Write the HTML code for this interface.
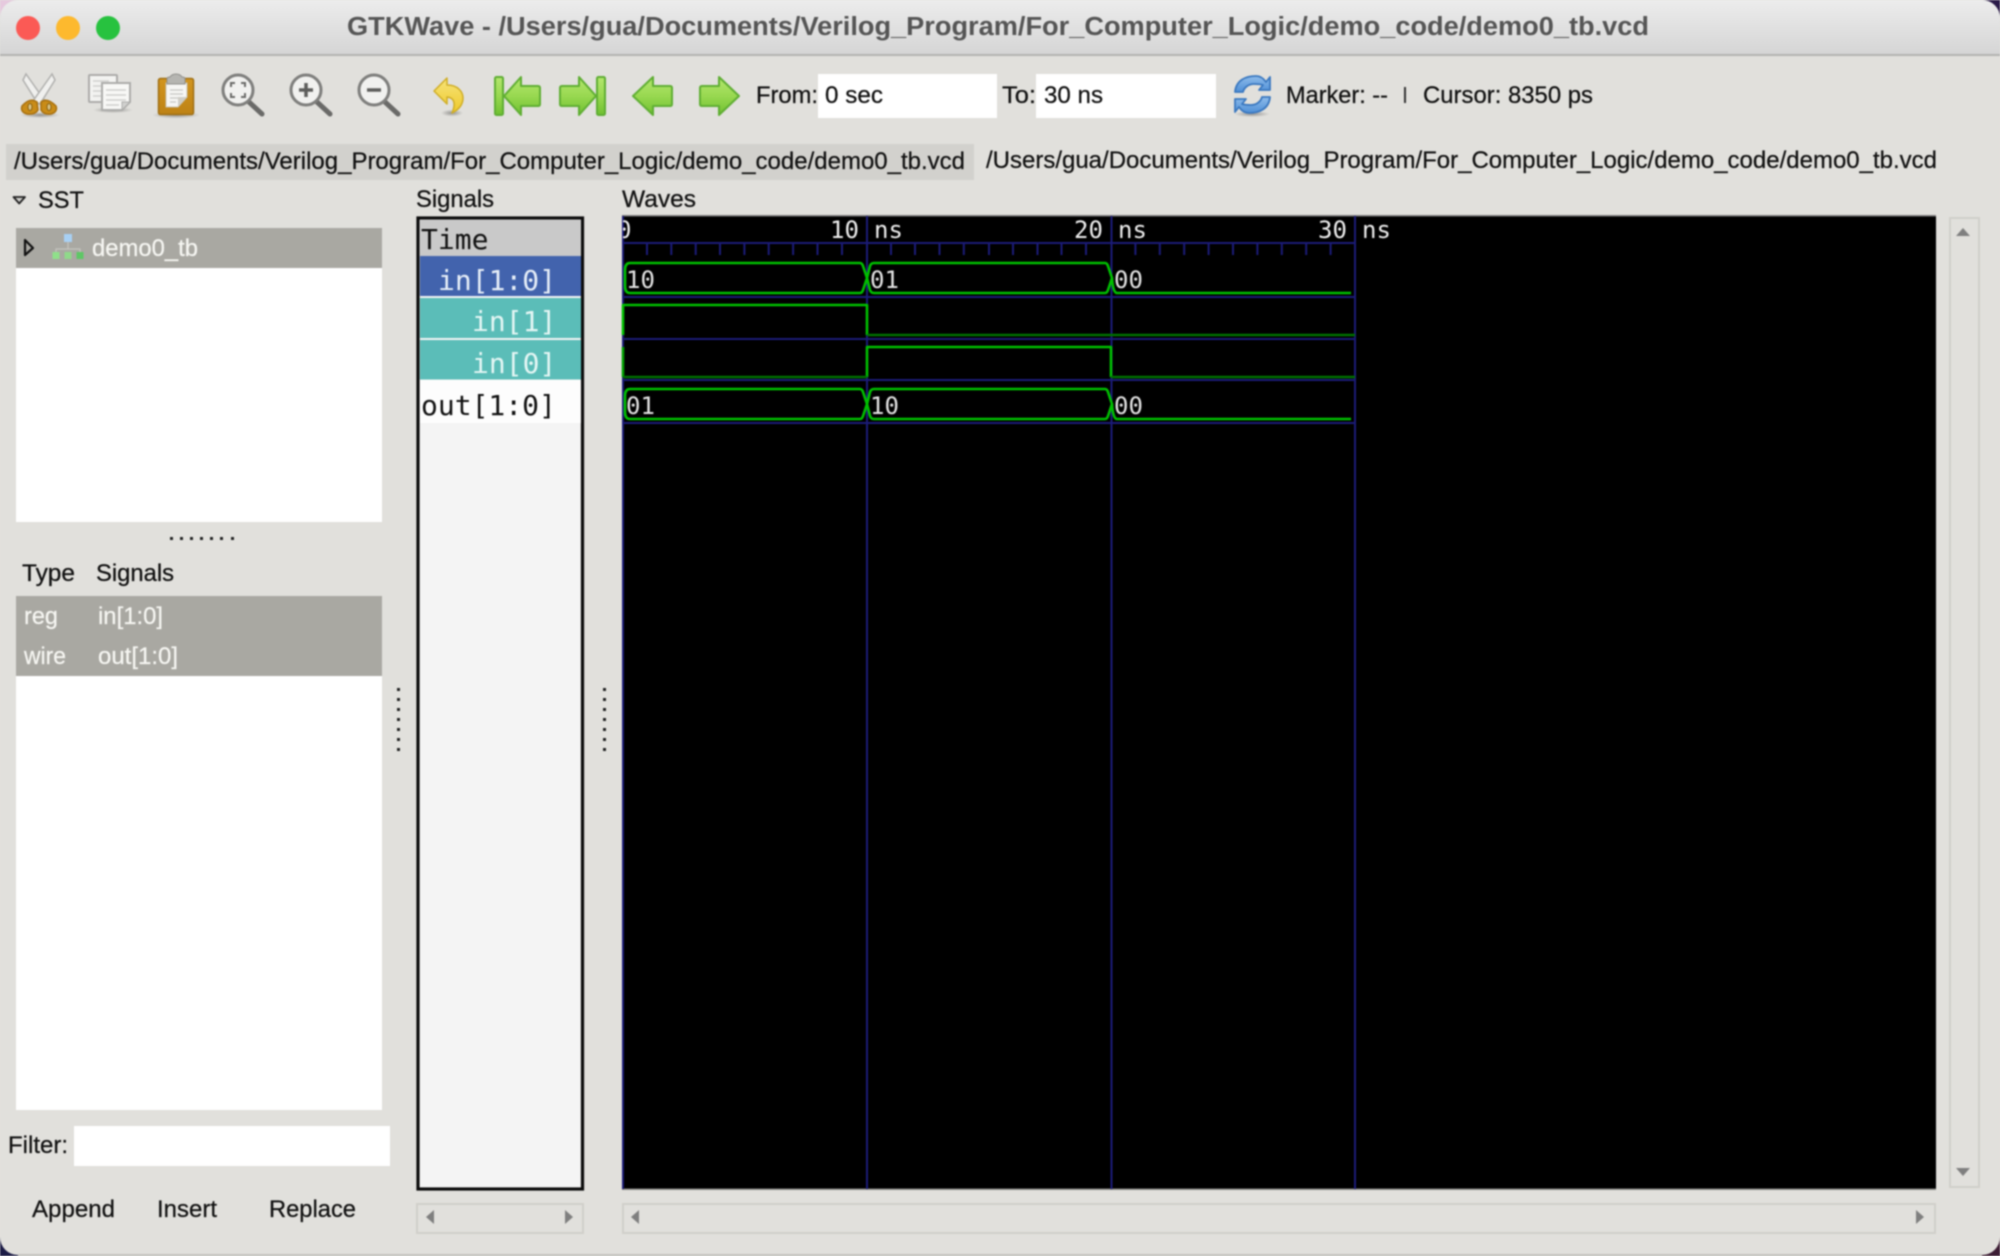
<!DOCTYPE html>
<html>
<head>
<meta charset="utf-8">
<title>GTKWave</title>
<style>
html,body{margin:0;padding:0;width:2000px;height:1256px;overflow:hidden;background:#e1e0dc}
svg{display:block;filter:blur(.7px)}
.s{font-family:"Liberation Sans",sans-serif;font-size:24.5px;fill:#111;stroke:#111;stroke-width:.25px}
.w{fill:#f6f6f2;stroke:#f6f6f2}
.m{font-family:"DejaVu Sans Mono",monospace;font-size:28px;fill:#111}
.v{font-family:"DejaVu Sans Mono",monospace;font-size:24px;fill:#e4e4e4}
.r{font-family:"DejaVu Sans Mono",monospace;font-size:24px;fill:#eee}
</style>
</head>
<body>
<svg xmlns="http://www.w3.org/2000/svg" width="2000" height="1256" viewBox="0 0 2000 1256">
<defs>
<linearGradient id="tb" x1="0" y1="0" x2="0" y2="1"><stop offset="0" stop-color="#ececec"/><stop offset="1" stop-color="#d5d5d5"/></linearGradient>
<linearGradient id="gr" x1="0" y1="0" x2="0" y2="1"><stop offset="0" stop-color="#b4e66e"/><stop offset=".5" stop-color="#98d850"/><stop offset="1" stop-color="#6fc030"/></linearGradient>
<linearGradient id="ye" x1="0" y1="0" x2="0" y2="1"><stop offset="0" stop-color="#f6e37a"/><stop offset="1" stop-color="#eec92a"/></linearGradient>
<linearGradient id="cb" x1="0" y1="0" x2="0" y2="1"><stop offset="0" stop-color="#d2951f"/><stop offset="1" stop-color="#bd8215"/></linearGradient>
<linearGradient id="bl" x1="0" y1="0" x2="0" y2="1"><stop offset="0" stop-color="#8fbcea"/><stop offset="1" stop-color="#4f8fd6"/></linearGradient>
<radialGradient id="sh"><stop offset="0" stop-color="#000" stop-opacity=".35"/><stop offset="1" stop-color="#000" stop-opacity="0"/></radialGradient>
<clipPath id="wc"><rect x="623" y="216" width="1313" height="973"/></clipPath>
</defs>

<!-- wallpaper corners -->
<rect x="0" y="0" width="30" height="30" fill="#e6c9de"/>
<rect x="1970" y="0" width="30" height="30" fill="#2a1a48"/>
<rect x="0" y="1226" width="30" height="30" fill="#1c1c46"/>
<rect x="1970" y="1226" width="30" height="30" fill="#3c1c34"/>

<!-- window -->
<rect x="0" y="0" width="2000" height="1255" rx="18" fill="#e1e0dc"/>
<path d="M0 54V18A18 18 0 0 1 18 0H1982A18 18 0 0 1 2000 18V54Z" fill="url(#tb)"/>
<rect x="0" y="54" width="2000" height="2" fill="#b3b3b1"/>
<rect x="18" y="1254" width="1964" height="2" fill="#c4c3bf"/>

<circle cx="28" cy="28" r="12" fill="#fb5a55"/>
<circle cx="68" cy="28" r="12" fill="#fdb92e"/>
<circle cx="108" cy="28" r="12" fill="#27c23f"/>
<text x="347" y="35" font-family="Liberation Sans, sans-serif" font-weight="bold" font-size="25.5" fill="#555" textLength="1302" lengthAdjust="spacingAndGlyphs">GTKWave - /Users/gua/Documents/Verilog_Program/For_Computer_Logic/demo_code/demo0_tb.vcd</text>

<!-- scissors -->
<g>
<ellipse cx="40" cy="115" rx="20" ry="3" fill="url(#sh)"/>
<path d="M26 74L45 101L38 104L23 80Z" fill="#f0f0ee" stroke="#b0b0ae" stroke-width="1.5"/>
<path d="M52 74L33 101L40 104L55 80Z" fill="#f0f0ee" stroke="#b0b0ae" stroke-width="1.5"/>
<path d="M22 106Q30 97 37 102L38 110Q35 115 27 114Q20 112 22 106Z" fill="#c98c18" stroke="#a8700f" stroke-width="1.5"/>
<path d="M56 106Q47 97 41 102L41 110Q44 115 51 114Q58 112 56 106Z" fill="#c98c18" stroke="#a8700f" stroke-width="1.5"/>
<ellipse cx="30" cy="107" rx="2" ry="3.5" fill="#d9c488" stroke="#8a6210"/>
<ellipse cx="49" cy="107" rx="2" ry="3.5" fill="#d9c488" stroke="#8a6210"/>
</g>
<!-- copy -->
<g>
<ellipse cx="113" cy="110" rx="20" ry="3" fill="url(#sh)"/>
<rect x="89" y="75" width="28" height="27" rx="1" fill="#f3f3f1" stroke="#acacaa" stroke-width="2"/>
<path d="M93 81h16M93 86h10M93 91h10M93 96h10" stroke="#d0d0ce" stroke-width="1.5"/>
<path d="M102 83H130V102L122 110H102Z" fill="#f8f8f6" stroke="#acacaa" stroke-width="2"/>
<path d="M130 102H122V110Z" fill="#d0d0ce" stroke="#acacaa"/>
<path d="M106 90h20M106 95h20M106 100h20M106 105h13" stroke="#cfcfcd" stroke-width="1.5"/>
</g>
<!-- clipboard -->
<g>
<ellipse cx="176" cy="115" rx="24" ry="3.5" fill="url(#sh)"/>
<rect x="158.5" y="78.5" width="35" height="36" rx="2" fill="url(#cb)" stroke="#9f6f14" stroke-width="1.5"/>
<path d="M166 83H187V97L178 107H166Z" fill="#f6f6f4" stroke="#c8c2b2"/>
<path d="M187 97H178V107Z" fill="#cfcdc6"/>
<path d="M170 90h13M170 94h13M170 98h8M170 102h6" stroke="#c7c7c4" stroke-width="1.2"/>
<path d="M167 84V79Q167 77 170 77Q172 74 176 74Q180 74 182 77Q185 77 185 79V84Z" fill="#b5b5b1" stroke="#8f8f8b"/>
</g>
<!-- zoom fit -->
<g fill="none">
<line x1="249" y1="102" x2="262" y2="114" stroke="#6a6a68" stroke-width="5" stroke-linecap="round"/>
<circle cx="238" cy="90" r="15" fill="#f1f1ef" stroke="#7f7f7d" stroke-width="3"/>
<path d="M231 87V83H235M241 83H245V87M245 93V97H241M235 97H231V93" stroke="#6a6a68" stroke-width="2"/>
</g>
<!-- zoom in -->
<g fill="none">
<line x1="317" y1="102" x2="330" y2="114" stroke="#6a6a68" stroke-width="5" stroke-linecap="round"/>
<circle cx="306" cy="90" r="15" fill="#f1f1ef" stroke="#7f7f7d" stroke-width="3"/>
<path d="M299 90H313M306 83V97" stroke="#5e5e5c" stroke-width="3.5"/>
</g>
<!-- zoom out -->
<g fill="none">
<line x1="385" y1="102" x2="398" y2="114" stroke="#6a6a68" stroke-width="5" stroke-linecap="round"/>
<circle cx="374" cy="90" r="15" fill="#f1f1ef" stroke="#7f7f7d" stroke-width="3"/>
<path d="M367 90H381" stroke="#5e5e5c" stroke-width="3.5"/>
</g>
<!-- undo -->
<g>
<ellipse cx="452" cy="113" rx="11" ry="3.5" fill="url(#sh)"/>
<path d="M434 91L447 78V85C458 85 463 92 463 98C463 105 458 110 452 113C455 106 456 98 447 97V104Z" fill="url(#ye)" stroke="#d0ae26" stroke-width="1.5" stroke-linejoin="round"/>
</g>
<!-- first -->
<g stroke="#5fae33" stroke-width="2" stroke-linejoin="round" fill="url(#gr)">
<rect x="495" y="77" width="8" height="38" rx="1.5"/>
<path d="M504 96L521 77V86H538Q540 86 540 88V104Q540 106 538 106H521V115Z"/>
</g>
<!-- last -->
<g stroke="#5fae33" stroke-width="2" stroke-linejoin="round" fill="url(#gr)">
<rect x="597" y="77" width="8" height="38" rx="1.5"/>
<path d="M596 96L579 77V86H562Q560 86 560 88V104Q560 106 562 106H579V115Z"/>
</g>
<!-- back -->
<path d="M633 96L653 77V86H670Q672 86 672 88V104Q672 106 670 106H653V115Z" fill="url(#gr)" stroke="#5fae33" stroke-width="2" stroke-linejoin="round"/>
<!-- forward -->
<path d="M739 96L719 77V86H702Q700 86 700 88V104Q700 106 702 106H719V115Z" fill="url(#gr)" stroke="#5fae33" stroke-width="2" stroke-linejoin="round"/>

<text class="s" x="756" y="103" textLength="62" lengthAdjust="spacingAndGlyphs">From:</text>
<rect x="818" y="74" width="179" height="44" fill="#fff"/>
<text class="s" x="825" y="103" textLength="58" lengthAdjust="spacingAndGlyphs">0 sec</text>
<text class="s" x="1002" y="103" textLength="34" lengthAdjust="spacingAndGlyphs">To:</text>
<rect x="1036" y="74" width="180" height="44" fill="#fff"/>
<text class="s" x="1044" y="103" textLength="59" lengthAdjust="spacingAndGlyphs">30 ns</text>

<!-- refresh -->
<g>
<ellipse cx="1252" cy="114" rx="18" ry="3" fill="url(#sh)"/>
<path d="M1235 92C1236 80 1246 76 1256 76C1261 76 1264 79 1266 82L1270 77V90H1259L1263 85C1260 84 1257 84 1254 84C1248 84 1244 88 1243 92Z" fill="url(#bl)" stroke="#3a78c0" stroke-width="1.8" stroke-linejoin="round"/>
<path d="M1270 97C1269 109 1259 113 1249 113C1244 113 1241 110 1239 107L1235 112V99H1246L1242 104C1245 105 1248 105 1251 105C1257 105 1261 101 1262 97Z" fill="url(#bl)" stroke="#3a78c0" stroke-width="1.8" stroke-linejoin="round"/>
</g>
<text class="s" x="1286" y="103" textLength="102" lengthAdjust="spacingAndGlyphs">Marker: --</text>
<rect x="1404" y="87" width="2" height="16" fill="#333"/>
<text class="s" x="1423" y="103" textLength="170" lengthAdjust="spacingAndGlyphs">Cursor: 8350 ps</text>

<!-- tabs -->
<rect x="6" y="144" width="968" height="36" fill="#d2d1cd"/>
<text class="s" x="14" y="169" textLength="951" lengthAdjust="spacingAndGlyphs">/Users/gua/Documents/Verilog_Program/For_Computer_Logic/demo_code/demo0_tb.vcd</text>
<text class="s" x="986" y="168" textLength="951" lengthAdjust="spacingAndGlyphs">/Users/gua/Documents/Verilog_Program/For_Computer_Logic/demo_code/demo0_tb.vcd</text>

<!-- SST -->
<path d="M13.5 197H25L19.2 203.5Z" fill="#cfcfcb" stroke="#222" stroke-width="1.8" stroke-linejoin="round"/>
<text class="s" x="38" y="208" textLength="46" lengthAdjust="spacingAndGlyphs">SST</text>
<rect x="16" y="228" width="366" height="294" fill="#fff"/>
<rect x="16" y="228" width="366" height="40" fill="#a9a8a2"/>
<path d="M25 240L33 248L25 255Z" fill="#a9a8a2" stroke="#111" stroke-width="2.2" stroke-linejoin="round"/>
<g>
<rect x="64" y="234" width="8" height="8" fill="#a8d0f4"/>
<path d="M68 242V249M56 252V249H80V252" stroke="#c4c4be" stroke-width="1.2" fill="none"/>
<rect x="52.5" y="252" width="7" height="7" fill="#8fe08a"/>
<rect x="64.5" y="252" width="7" height="7" fill="#8fd98a"/>
<rect x="76.5" y="252" width="7" height="7" fill="#5ec766"/>
</g>
<text class="s w" x="92" y="256" textLength="106" lengthAdjust="spacingAndGlyphs">demo0_tb</text>

<!-- h handle -->
<g fill="#222">
<rect x="170" y="537" width="3" height="3"/><rect x="180" y="537" width="3" height="3"/><rect x="190" y="537" width="3" height="3"/><rect x="200" y="537" width="3" height="3"/><rect x="210" y="537" width="3" height="3"/><rect x="220" y="537" width="3" height="3"/><rect x="231" y="537" width="3" height="3"/>
</g>

<text class="s" x="22" y="581" textLength="53" lengthAdjust="spacingAndGlyphs">Type</text>
<text class="s" x="96" y="581" textLength="78" lengthAdjust="spacingAndGlyphs">Signals</text>
<rect x="16" y="596" width="366" height="514" fill="#fff"/>
<rect x="16" y="596" width="366" height="80" fill="#a9a8a2"/>
<text class="s w" x="24" y="624" textLength="34" lengthAdjust="spacingAndGlyphs">reg</text>
<text class="s w" x="98" y="624" textLength="65" lengthAdjust="spacingAndGlyphs">in[1:0]</text>
<text class="s w" x="24" y="664" textLength="42" lengthAdjust="spacingAndGlyphs">wire</text>
<text class="s w" x="98" y="664" textLength="80" lengthAdjust="spacingAndGlyphs">out[1:0]</text>

<!-- v handles -->
<g fill="#222">
<rect x="397" y="688" width="3" height="3"/><rect x="397" y="698" width="3" height="3"/><rect x="397" y="708" width="3" height="3"/><rect x="397" y="718" width="3" height="3"/><rect x="397" y="728" width="3" height="3"/><rect x="397" y="738" width="3" height="3"/><rect x="397" y="748" width="3" height="3"/>
<rect x="603" y="688" width="3" height="3"/><rect x="603" y="698" width="3" height="3"/><rect x="603" y="708" width="3" height="3"/><rect x="603" y="718" width="3" height="3"/><rect x="603" y="728" width="3" height="3"/><rect x="603" y="738" width="3" height="3"/><rect x="603" y="748" width="3" height="3"/>
</g>

<text class="s" x="8" y="1153" textLength="60" lengthAdjust="spacingAndGlyphs">Filter:</text>
<rect x="74" y="1126" width="316" height="40" fill="#fff"/>
<text class="s" x="32" y="1217" textLength="83" lengthAdjust="spacingAndGlyphs">Append</text>
<text class="s" x="157" y="1217" textLength="60" lengthAdjust="spacingAndGlyphs">Insert</text>
<text class="s" x="269" y="1217" textLength="87" lengthAdjust="spacingAndGlyphs">Replace</text>

<!-- signals -->
<text class="s" x="416" y="207" textLength="78" lengthAdjust="spacingAndGlyphs">Signals</text>
<rect x="418" y="218" width="164.5" height="971" fill="#f4f4f4" stroke="#0c0c0c" stroke-width="3.2"/>
<rect x="420" y="220" width="161" height="36" fill="#c9c9c9"/>
<rect x="420" y="256" width="161" height="40" fill="#4263ad"/>
<rect x="420" y="298" width="161" height="40" fill="#5bbdb8"/>
<rect x="420" y="340" width="161" height="39.5" fill="#5bbdb8"/>
<rect x="420" y="380" width="161" height="43" fill="#fdfdfd"/>
<text class="m" x="421" y="249">Time</text>
<text class="m" x="438" y="290" style="fill:#e6eef8">in[1:0]</text>
<text class="m" x="472" y="331" style="fill:#e4f6f4">in[1]</text>
<text class="m" x="472" y="373" style="fill:#e4f6f4">in[0]</text>
<text class="m" x="421" y="415">out[1:0]</text>

<!-- waves -->
<text class="s" x="622" y="207" textLength="74" lengthAdjust="spacingAndGlyphs">Waves</text>
<rect x="622" y="215" width="1314" height="975" fill="#000"/>
<rect x="622" y="215" width="1314" height="1.5" fill="#7c7c7c"/>
<rect x="622" y="1188.5" width="1314" height="1.5" fill="#8a8a86"/>
<g stroke="#1b1b78" stroke-width="2" fill="none">
<path d="M623 216V1189M867 216V1189M1111.5 216V1189M1355 216V1189"/>
<path d="M623 243H1355M623 297H1355M623 339H1355M623 380H1355M623 423H1355"/>
<path d="M647 243V255M671.3 243V255M695.7 243V255M720 243V255M744.4 243V255M768.7 243V255M793.1 243V255M817.5 243V255M842 243V255M891 243V255M915 243V255M939.5 243V255M963.8 243V255M989 243V255M1013 243V255M1037.5 243V255M1061.5 243V255M1086 243V255M1135.4 243V255M1159.8 243V255M1184.2 243V255M1208.6 243V255M1233 243V255M1257.4 243V255M1281.8 243V255M1306.2 243V255M1330.6 243V255"/>
</g>
<g clip-path="url(#wc)">
<text class="r" x="617" y="238">0</text>
</g>
<text class="r" x="830" y="238">10</text>
<text class="r" x="874" y="238">ns</text>
<text class="r" x="1074" y="238">20</text>
<text class="r" x="1118" y="238">ns</text>
<text class="r" x="1318" y="238">30</text>
<text class="r" x="1362" y="238">ns</text>

<g fill="none" stroke="#00c000" stroke-width="2.6" stroke-linejoin="round">
<!-- bus in -->
<path d="M630 263Q625 263 625 270V286Q625 293 630 293H860Q862 293 863 290L867 278L863 266Q862 263 860 263H630"/>
<path d="M874 263Q871 263 870 266L867 278L870 290Q871 293 874 293H1105Q1107 293 1108 290L1112 278L1108 266Q1107 263 1105 263H874"/>
<path d="M1112 278Q1113 293 1117 293H1351"/>
<!-- bus out -->
<path d="M630 389Q625 389 625 396V412Q625 419 630 419H860Q862 419 863 416L867 404L863 392Q862 389 860 389H630"/>
<path d="M874 389Q871 389 870 392L867 404L870 416Q871 419 874 419H1105Q1107 419 1108 416L1112 404L1108 392Q1107 389 1105 389H874"/>
<path d="M1112 404Q1113 419 1117 419H1351"/>
<!-- in[1] -->
<path d="M623 335V305H867V335"/>
<!-- in[0] -->
<path d="M867 377V347H1111V377"/>
<path d="M623 347V377" stroke="#00a000"/>
</g>
<g fill="none" stroke="#007000" stroke-width="2.4">
<path d="M867 335H1355"/>
<path d="M623 377H867"/>
<path d="M1111 377H1355"/>
</g>
<text class="v" x="626" y="288">10</text>
<text class="v" x="870" y="288">01</text>
<text class="v" x="1114" y="288">00</text>
<text class="v" x="626" y="414">01</text>
<text class="v" x="870" y="414">10</text>
<text class="v" x="1114" y="414">00</text>

<!-- scrollbars -->
<rect x="417" y="1204" width="166" height="29" fill="none" stroke="#d0cfca" stroke-width="2"/>
<rect x="623" y="1204" width="1312" height="29" fill="none" stroke="#d0cfca" stroke-width="2"/>
<rect x="1950" y="218" width="29" height="969" fill="none" stroke="#d0cfca" stroke-width="2"/>
<g fill="#7f7f7f">
<path d="M434 1210V1224L426 1217Z"/>
<path d="M565 1210V1224L573 1217Z"/>
<path d="M639 1210V1224L631 1217Z"/>
<path d="M1916 1210V1224L1924 1217Z"/>
<path d="M1956 1168H1970L1963 1176Z"/>
<path d="M1956 236H1970L1963 228Z"/>
</g>
</svg>
</body>
</html>
